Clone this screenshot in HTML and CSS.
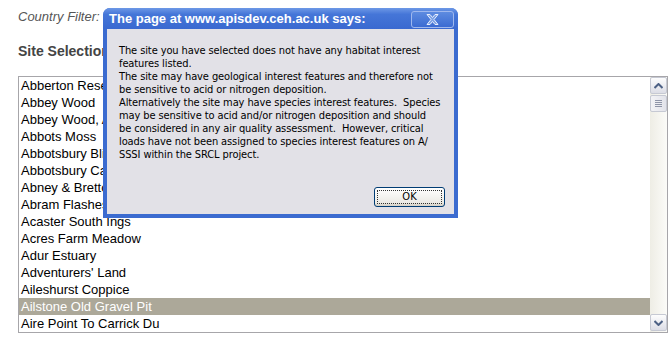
FILE: index.html
```html
<!DOCTYPE html>
<html>
<head>
<meta charset="utf-8">
<link rel="stylesheet" href="styles.css">
</head>
<body>
<div class="page">
  <div class="filter">Country Filter:</div>
  <h2 class="heading">Site Selection</h2>
  <div class="listbox">
    <ul class="items">
      <li>Abberton Reservoir</li>
      <li>Abbey Wood</li>
      <li>Abbey Wood, Abbey</li>
      <li>Abbots Moss</li>
      <li>Abbotsbury Blind Lane</li>
      <li>Abbotsbury Castle</li>
      <li>Abney &amp; Bretton Moors</li>
      <li>Abram Flashes</li>
      <li>Acaster South Ings</li>
      <li>Acres Farm Meadow</li>
      <li>Adur Estuary</li>
      <li>Adventurers' Land</li>
      <li>Aileshurst Coppice</li>
      <li class="sel">Ailstone Old Gravel Pit</li>
      <li>Aire Point To Carrick Du</li>
    </ul>
    <div class="scrollbar">
      <div class="sbtn"><svg width="9" height="6" viewBox="0 0 9 6"><path d="M0.5 5 L4.5 1 L8.5 5" fill="none" stroke="#4d6185" stroke-width="2"/></svg></div>
      <div class="thumb"><span></span><span></span><span></span><span></span></div>
      <div class="track"></div>
      <div class="sbtn"><svg width="9" height="6" viewBox="0 0 9 6"><path d="M0.5 1 L4.5 5 L8.5 1" fill="none" stroke="#4d6185" stroke-width="2"/></svg></div>
    </div>
  </div>
</div>

<div class="dialog">
  <div class="titlebar">
    <span class="title">The page at www.apisdev.ceh.ac.uk says:</span>
    <div class="close"><svg width="13" height="11" viewBox="0 0 13 11"><path d="M1 0.5 H4 L6.5 3.5 L9 0.5 H12 L8 5.5 L12 10.5 H9 L6.5 7.5 L4 10.5 H1 L5 5.5 Z" fill="#7ea3e6" stroke="#e8eefc" stroke-width="1"/></svg></div>
  </div>
  <div class="dbody">
    <p class="msg">The site you have selected does not have any habitat interest<br>features listed.<br>The site may have geological interest features and therefore not<br>be sensitive to acid or nitrogen deposition.<br>Alternatively the site may have species interest features.&nbsp; Species<br>may be sensitive to acid and/or nitrogen deposition and should<br>be considered in any air quality assessment.&nbsp; However, critical<br>loads have not been assigned to species interest features on A/<br>SSSI within the SRCL project.</p>
    <div class="actions"><button class="ok"><span>OK</span></button></div>
  </div>
</div>
</body>
</html>
```
FILE: styles.css
```css
html, body { margin: 0; padding: 0; background: #fff; }
body { width: 670px; height: 354px; overflow: hidden; position: relative; font-family: "Liberation Sans", Arial, sans-serif; }

.page { padding: 9px 2px 0 18px; }
.filter { font-style: italic; font-size: 13px; color: #555; height: 15px; line-height: 15px; }
.heading { margin: 19px 0 17px; font-size: 14px; font-weight: bold; color: #444; height: 16px; line-height: 16px; }

.listbox { display: flex; border: 1px solid #a7a6aa; width: 648px; height: 255px; background: #fff; }
.items { list-style: none; margin: 0; padding: 0; flex: 1; }
.items li { height: 17px; line-height: 17px; font-size: 13px; color: #000; padding-left: 2px; white-space: nowrap; }
.items li.sel { background: #aca899; color: #fff; }

.scrollbar { width: 17px; display: flex; flex-direction: column; background: linear-gradient(to right, #eeede5, #fbfbf8); }
.sbtn { height: 15px; margin: 0 0 1px; border: 1px solid #c6c9d3; border-radius: 2px; background: linear-gradient(to bottom, #fdfdfd, #dcdde6); display: flex; align-items: center; justify-content: center; }
.thumb { height: 15px; border: 1px solid #c6c9d3; border-radius: 2px; background: linear-gradient(to right, #f3f3f6, #e2e3ea); display: flex; flex-direction: column; align-items: center; justify-content: center; gap: 1px; }
.thumb span { display: block; width: 7px; height: 1px; background: #8f95a8; }
.track { flex: 1; }

.dialog { position: absolute; left: 103px; top: 8px; width: 355px; height: 210px; display: flex; flex-direction: column; background: #3b6bd0; border-radius: 7px 7px 0 0; box-sizing: border-box; }
.titlebar { height: 21px; display: flex; align-items: center; justify-content: space-between; padding: 0 4px 0 6px; background: linear-gradient(to bottom, #6d98e6 0%, #4576d8 30%, #3a69d0 100%); border-radius: 7px 7px 0 0; }
.title { color: #fff; font-weight: bold; font-size: 13px; font-family: "Liberation Sans", Arial, sans-serif; white-space: nowrap; }
.close { width: 41px; height: 15px; margin-top: 1px; border: 1px solid #9fb8ee; border-radius: 3px; background: linear-gradient(to bottom, #5d8be0, #3b6bd2); display: flex; align-items: center; justify-content: center; }

.dbody { flex: 1; margin: 0 4px 4px 4px; background: #e2e1e7; display: flex; flex-direction: column; }
.msg { margin: 15px 0 0 12px; font-family: "DejaVu Sans Condensed", "DejaVu Sans", sans-serif; font-size: 11px; letter-spacing: -0.1px; line-height: 13px; color: #000; white-space: nowrap; }
.actions { margin-top: auto; display: flex; justify-content: flex-end; padding: 0 9px 7px 0; }
.ok { width: 71px; height: 20px; padding: 2px; border: 1px solid #003c74; border-radius: 3px; background: linear-gradient(to bottom, #ffffff, #ecebe6 80%, #d6d0c5); font-family: "DejaVu Sans Condensed", sans-serif; font-size: 11px; color: #000; box-sizing: border-box; display: flex; }
.ok span { flex: 1; border: 1px dotted #333; display: flex; align-items: center; justify-content: center; line-height: 12px; }
```
